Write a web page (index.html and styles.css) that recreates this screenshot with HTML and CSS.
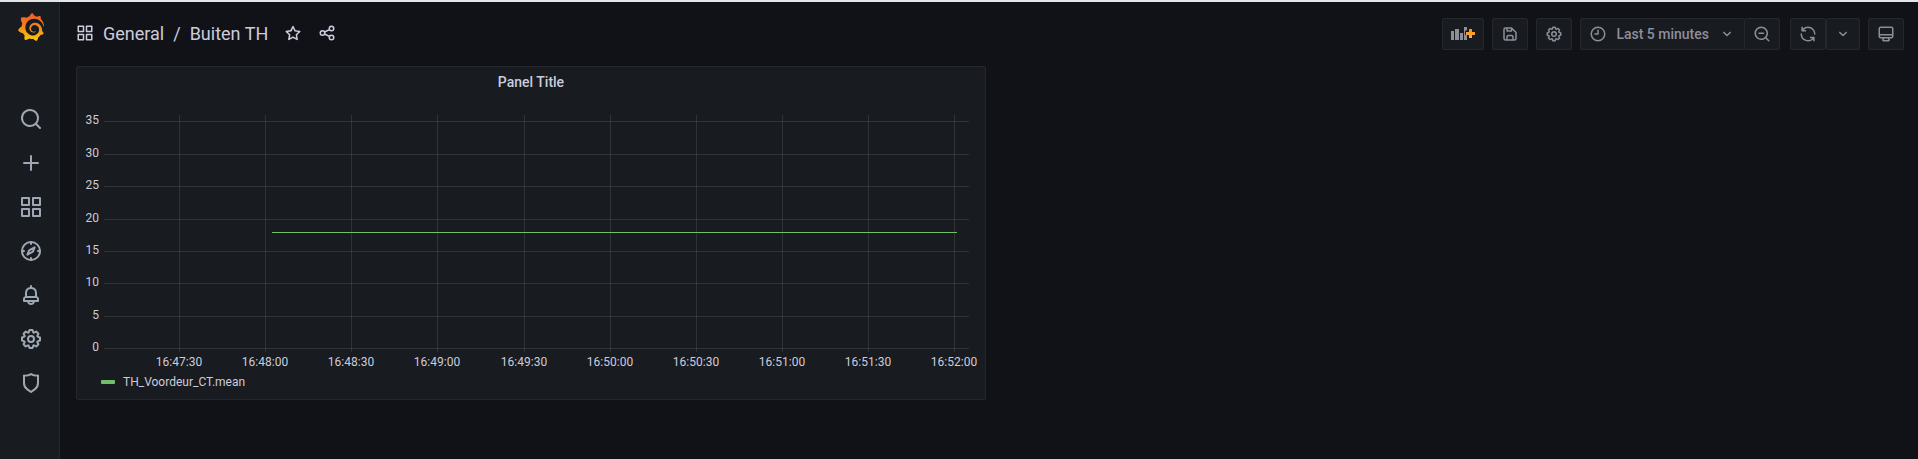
FILE: index.html
```html
<!DOCTYPE html>
<html lang="en">
<head>
    <meta charset="UTF-8">
    <meta name="viewport" content="width=device-width, initial-scale=1.0">
    <title>Buiten TH - Grafana</title>
    <link rel="stylesheet" href="styles.css">
</head>
<body>
    <!-- Icon set -->
    <svg class="icon-defs" aria-hidden="true">
        <symbol id="i-search" viewBox="0 0 24 24"><path d="M21.71,20.29,18,16.61A9,9,0,1,0,16.61,18l3.68,3.68a1,1,0,0,0,1.42,0A1,1,0,0,0,21.71,20.29ZM11,18a7,7,0,1,1,7-7A7,7,0,0,1,11,18Z"/></symbol>
        <symbol id="i-plus" viewBox="0 0 24 24"><path d="M19,11H13V5a1,1,0,0,0-2,0v6H5a1,1,0,0,0,0,2h6v6a1,1,0,0,0,2,0V13h6a1,1,0,0,0,0-2Z"/></symbol>
        <symbol id="i-apps" viewBox="0 0 24 24"><path d="M10,13H3a1,1,0,0,0-1,1v7a1,1,0,0,0,1,1h7a1,1,0,0,0,1-1V14A1,1,0,0,0,10,13ZM9,20H4V15H9ZM21,2H14a1,1,0,0,0-1,1v7a1,1,0,0,0,1,1h7a1,1,0,0,0,1-1V3A1,1,0,0,0,21,2ZM20,9H15V4h5Zm1,4H14a1,1,0,0,0-1,1v7a1,1,0,0,0,1,1h7a1,1,0,0,0,1-1V14A1,1,0,0,0,21,13Zm-1,7H15V15h5ZM10,2H3A1,1,0,0,0,2,3v7a1,1,0,0,0,1,1h7a1,1,0,0,0,1-1V3A1,1,0,0,0,10,2ZM9,9H4V4H9Z"/></symbol>
        <symbol id="i-compass" viewBox="0 0 24 24">
            <g fill="none" stroke="currentColor" stroke-width="2" stroke-linecap="round" stroke-linejoin="round">
                <circle cx="12" cy="12" r="9"/>
                <path d="M12 3v2M12 19v2M3 12h2M19 12h2"/>
                <path d="M15.6 8.4l-1.7 4.3-5.5 2.9 1.7-4.3z"/>
            </g>
        </symbol>
        <symbol id="i-bell" viewBox="0 0 24 24"><path d="M18,13.18V10a6,6,0,0,0-5-5.91V3a1,1,0,0,0-2,0V4.09A6,6,0,0,0,6,10v3.18A3,3,0,0,0,4,16v2a1,1,0,0,0,1,1H8.14a4,4,0,0,0,7.72,0H19a1,1,0,0,0,1-1V16A3,3,0,0,0,18,13.18ZM8,10a4,4,0,0,1,8,0v3H8Zm4,10a2,2,0,0,1-1.72-1h3.44A2,2,0,0,1,12,20Zm6-3H6V16a1,1,0,0,1,1-1H17a1,1,0,0,1,1,1Z"/></symbol>
        <symbol id="i-cog" viewBox="0 0 24 24"><path d="M21.32,9.55l-1.89-.63.89-1.78A1,1,0,0,0,20.13,6L18,3.87a1,1,0,0,0-1.15-.19l-1.78.89-.63-1.89A1,1,0,0,0,13.5,2h-3a1,1,0,0,0-.95.68L8.92,4.57,7.14,3.68A1,1,0,0,0,6,3.87L3.87,6a1,1,0,0,0-.19,1.15l.89,1.78-1.89.63A1,1,0,0,0,2,10.5v3a1,1,0,0,0,.68.95l1.89.63-.89,1.78A1,1,0,0,0,3.87,18L6,20.13a1,1,0,0,0,1.15.19l1.78-.89.63,1.89a1,1,0,0,0,.95.68h3a1,1,0,0,0,.95-.68l.63-1.89,1.78.89A1,1,0,0,0,18,20.13L20.13,18a1,1,0,0,0,.19-1.15l-.89-1.78,1.89-.63A1,1,0,0,0,22,13.5v-3A1,1,0,0,0,21.32,9.55ZM20,12.78l-1.2.4A2,2,0,0,0,17.64,16l.57,1.14-1.1,1.1L16,17.64a2,2,0,0,0-2.79,1.16l-.4,1.2H11.22l-.4-1.2A2,2,0,0,0,8,17.64l-1.14.57-1.1-1.1L6.36,16A2,2,0,0,0,5.2,13.18L4,12.78V11.22l1.2-.4A2,2,0,0,0,6.36,8L5.79,6.89l1.1-1.1L8,6.36A2,2,0,0,0,10.82,5.2l.4-1.2h1.56l.4,1.2A2,2,0,0,0,16,6.36l1.14-.57,1.1,1.1L17.64,8a2,2,0,0,0,1.16,2.79l1.2.4ZM12,8a4,4,0,1,0,4,4A4,4,0,0,0,12,8Zm0,6a2,2,0,1,1,2-2A2,2,0,0,1,12,14Z"/></symbol>
        <symbol id="i-shield" viewBox="0 0 24 24"><path d="M19.63,3.65a1,1,0,0,0-.84-.2,8,8,0,0,1-6.22-1.27,1,1,0,0,0-1.14,0A8,8,0,0,1,5.21,3.45a1,1,0,0,0-.84.2A1,1,0,0,0,4,4.43v7.45a9,9,0,0,0,3.77,7.33l3.65,2.6a1,1,0,0,0,1.16,0l3.65-2.6A9,9,0,0,0,20,11.88V4.43A1,1,0,0,0,19.63,3.65ZM18,11.88a7,7,0,0,1-2.93,5.7L12,19.77,8.93,17.58A7,7,0,0,1,6,11.88V5.58a10,10,0,0,0,6-1.39,10,10,0,0,0,6,1.39Z"/></symbol>
        <symbol id="i-star" viewBox="0 0 24 24"><path d="M22,9.67A1,1,0,0,0,21.14,9l-5.69-.83L12.9,3a1,1,0,0,0-1.8,0L8.55,8.16,2.86,9a1,1,0,0,0-.81.68,1,1,0,0,0,.25,1l4.13,4-1,5.68A1,1,0,0,0,6.9,21.44L12,18.77l5.1,2.67a.93.93,0,0,0,.46.12,1,1,0,0,0,.59-.19,1,1,0,0,0,.4-1l-1-5.68,4.13-4A1,1,0,0,0,22,9.67Zm-6.15,4a1,1,0,0,0-.29.88l.72,4.2-3.76-2a1.06,1.06,0,0,0-.94,0l-3.76,2,.72-4.2a1,1,0,0,0-.29-.88l-3-3,4.21-.61a1,1,0,0,0,.76-.55L12,5.7l1.88,3.82a1,1,0,0,0,.76.55l4.21.61Z"/></symbol>
        <symbol id="i-share" viewBox="0 0 24 24">
            <g fill="none" stroke="currentColor" stroke-width="2">
                <circle cx="18" cy="6" r="3"/>
                <circle cx="6" cy="12" r="3"/>
                <circle cx="18" cy="18" r="3"/>
                <path d="M8.700 10.700l6.600-3.300M8.700 13.300l6.600 3.300"/>
            </g>
        </symbol>
        <symbol id="i-save" viewBox="0 0 24 24"><path d="M20.71,9.29l-6-6a1,1,0,0,0-.32-.21A1.09,1.09,0,0,0,14,3H6A3,3,0,0,0,3,6V18a3,3,0,0,0,3,3H18a3,3,0,0,0,3-3V10A1,1,0,0,0,20.71,9.29ZM9,5h4V7H9Zm6,14H9V16a1,1,0,0,1,1-1h4a1,1,0,0,1,1,1Zm4-1a1,1,0,0,1-1,1H17V16a3,3,0,0,0-3-3H10a3,3,0,0,0-3,3v3H6a1,1,0,0,1-1-1V6A1,1,0,0,1,6,5H7V8A1,1,0,0,0,8,9h6a1,1,0,0,0,1-1V6.41l4,4Z"/></symbol>
        <symbol id="i-clock" viewBox="0 0 24 24"><path d="M12,2A10,10,0,1,0,22,12,10,10,0,0,0,12,2Zm0,18a8,8,0,1,1,8-8A8,8,0,0,1,12,20ZM12,6a1,1,0,0,0-1,1v4H8a1,1,0,0,0,0,2h4a1,1,0,0,0,1-1V7A1,1,0,0,0,12,6Z"/></symbol>
        <symbol id="i-angle-down" viewBox="0 0 24 24"><path d="M17,9.17a1,1,0,0,0-1.41,0L12,12.71,8.46,9.17a1,1,0,0,0-1.41,0,1,1,0,0,0,0,1.42l4.24,4.24a1,1,0,0,0,1.42,0L17,10.59A1,1,0,0,0,17,9.17Z"/></symbol>
        <symbol id="i-search-minus" viewBox="0 0 24 24"><path d="M21.71,20.29,18,16.61A9,9,0,1,0,16.61,18l3.68,3.68a1,1,0,0,0,1.42,0A1,1,0,0,0,21.71,20.29ZM11,18a7,7,0,1,1,7-7A7,7,0,0,1,11,18Z"/><path d="M14,10H8a1,1,0,0,0,0,2h6a1,1,0,0,0,0-2Z"/></symbol>
        <symbol id="i-sync" viewBox="0 0 24 24"><path d="M19.91,15.51H15.38a1,1,0,0,0,0,2h2.4A8,8,0,0,1,4,12a1,1,0,0,0-2,0,10,10,0,0,0,16.88,7.23V21a1,1,0,0,0,2,0V16.5A1,1,0,0,0,19.91,15.51ZM12,2A10,10,0,0,0,5.12,4.77V3a1,1,0,0,0-2,0V7.5a1,1,0,0,0,1,1h4.5a1,1,0,0,0,0-2H6.22A8,8,0,0,1,20,12a1,1,0,0,0,2,0A10,10,0,0,0,12,2Z"/></symbol>
        <symbol id="i-monitor" viewBox="0 0 24 24"><path d="M19,2H5A3,3,0,0,0,2,5V15a3,3,0,0,0,3,3H7.64l-.58,1a2,2,0,0,0,0,2,2,2,0,0,0,1.75,1h6.46A2,2,0,0,0,17,21a2,2,0,0,0,0-2l-.59-1H19a3,3,0,0,0,3-3V5A3,3,0,0,0,19,2ZM8.77,20,10,18H14l1.2,2ZM20,15a1,1,0,0,1-1,1H5a1,1,0,0,1-1-1V14H20Zm0-3H4V5A1,1,0,0,1,5,4H19a1,1,0,0,1,1,1Z"/></symbol>
    </svg>

    <nav class="sidebar" aria-label="Main menu">
        <a href="#" class="logo" aria-label="Home">
            <svg viewBox="0 0 24 24" width="28" height="28">
                <defs>
                    <linearGradient id="logo-fill" x1="0" y1="0" x2="0" y2="1">
                        <stop offset="0" stop-color="#f05a28"/>
                        <stop offset="0.4" stop-color="#f47b20"/>
                        <stop offset="1" stop-color="#fbca0a"/>
                    </linearGradient>
                </defs>
                <path fill="url(#logo-fill)" d="M23.02 10.59a8.578 8.578 0 0 0-.862-3.034 8.911 8.911 0 0 0-1.789-2.445c.337-1.342-.413-2.505-.413-2.505-1.292-.08-2.113.4-2.416.62-.052-.02-.102-.044-.154-.064-.22-.089-.446-.172-.677-.247-.231-.073-.47-.14-.711-.197a9.867 9.867 0 0 0-.875-.161C14.557.753 12.94 0 12.94 0c-1.804 1.145-2.147 2.744-2.147 2.744l-.018.093c-.098.029-.2.057-.298.088-.138.042-.275.094-.413.143-.138.055-.275.107-.41.166a8.869 8.869 0 0 0-1.557.87l-.063-.029c-2.497-.955-4.716.195-4.716.195-.203 2.658.996 4.33 1.235 4.636a11.608 11.608 0 0 0-.607 2.635C1.636 12.677.953 15.014.953 15.014c1.926 2.214 4.171 2.351 4.171 2.351.003-.002.006-.002.006-.005.285.509.615.994.986 1.446.156.19.32.371.488.548-.704 2.009.099 3.68.099 3.68 2.144.08 3.553-.937 3.849-1.173a9.784 9.784 0 0 0 3.164.501h.08l.055-.003.107-.002.103-.005.003.002c1.01 1.44 2.788 1.646 2.788 1.646 1.264-1.332 1.337-2.653 1.337-2.94v-.058c0-.02-.003-.039-.003-.06.265-.187.52-.387.758-.6a7.875 7.875 0 0 0 1.415-1.7c1.43.083 2.437-.885 2.437-.885-.236-1.49-1.085-2.216-1.264-2.354l-.018-.013-.016-.013a.217.217 0 0 1-.031-.02c.008-.092.016-.18.02-.27.011-.162.016-.323.016-.48v-.253l-.005-.098-.008-.135a1.891 1.891 0 0 0-.01-.13c-.003-.042-.008-.083-.013-.125l-.016-.124-.018-.122a6.215 6.215 0 0 0-2.032-3.73 6.015 6.015 0 0 0-3.222-1.46 6.292 6.292 0 0 0-.85-.048l-.107.002h-.063l-.044.003-.104.008a4.777 4.777 0 0 0-3.335 1.695c-.332.4-.592.84-.768 1.297a4.594 4.594 0 0 0-.312 1.817l.003.091c.005.055.007.11.013.164a3.615 3.615 0 0 0 .698 1.82 3.53 3.53 0 0 0 1.827 1.282c.33.098.66.14.971.137.039 0 .078 0 .114-.002l.063-.003c.02 0 .041-.003.062-.003.034-.002.065-.007.099-.01.007 0 .018-.003.028-.003l.031-.005.06-.008a1.18 1.18 0 0 0 .112-.02c.036-.008.072-.013.109-.024a2.634 2.634 0 0 0 .914-.415c.028-.02.056-.041.085-.065a.248.248 0 0 0 .039-.35.244.244 0 0 0-.309-.06l-.078.042c-.09.044-.184.083-.283.116a2.476 2.476 0 0 1-.475.096c-.028.003-.054.006-.083.006l-.083.002c-.026 0-.054 0-.08-.002l-.102-.006h-.012l-.024.006c-.016-.003-.031-.003-.044-.006-.031-.002-.06-.007-.091-.01a2.59 2.59 0 0 1-.724-.213 2.557 2.557 0 0 1-.667-.438 2.52 2.52 0 0 1-.805-1.475 2.306 2.306 0 0 1-.029-.444l.006-.122v-.023l.002-.031c.003-.021.003-.04.005-.06a3.163 3.163 0 0 1 1.352-2.29 3.12 3.12 0 0 1 .937-.43 2.946 2.946 0 0 1 .776-.101h.06l.07.002.045.003h.026l.07.005a4.041 4.041 0 0 1 1.635.49 3.94 3.94 0 0 1 1.602 1.662 3.77 3.77 0 0 1 .397 1.414l.005.076.003.075c.002.026.002.05.002.075 0 .024.003.052 0 .07v.065l-.002.073-.008.174a6.195 6.195 0 0 1-.08.639 5.1 5.1 0 0 1-.267.927 5.31 5.31 0 0 1-.624 1.13 5.052 5.052 0 0 1-3.237 2.014 4.82 4.82 0 0 1-.649.066l-.039.003h-.287a6.607 6.607 0 0 1-1.716-.265 6.776 6.776 0 0 1-3.4-2.274 6.75 6.75 0 0 1-.746-1.15 6.616 6.616 0 0 1-.714-2.596l-.005-.083-.002-.02v-.056l-.003-.073v-.096l-.003-.104v-.07l.003-.163c.008-.22.026-.45.054-.678a8.707 8.707 0 0 1 .28-1.355c.128-.444.286-.872.473-1.277a7.04 7.04 0 0 1 1.456-2.1 5.925 5.925 0 0 1 .953-.763c.169-.111.343-.213.524-.306.089-.05.182-.091.273-.135.047-.02.093-.042.138-.062a7.177 7.177 0 0 1 .714-.267l.145-.045c.049-.015.098-.026.148-.041.098-.029.197-.052.296-.076.049-.013.1-.02.15-.033l.15-.032.151-.028.076-.013.075-.01.153-.024c.057-.01.114-.013.171-.023l.169-.021c.036-.003.073-.008.106-.01l.073-.008.036-.003.042-.002c.057-.003.114-.008.171-.01l.086-.006h.023l.037-.003.145-.007a7.999 7.999 0 0 1 1.708.125 7.917 7.917 0 0 1 2.048.68 8.253 8.253 0 0 1 1.672 1.09l.09.077.089.078c.06.052.114.107.171.159.057.052.112.106.166.16.052.055.107.107.159.164a8.671 8.671 0 0 1 1.41 1.978c.012.026.028.052.04.078l.04.078.075.156c.023.051.05.1.07.153l.065.15a8.848 8.848 0 0 1 .45 1.34.19.19 0 0 0 .201.142.186.186 0 0 0 .172-.184c.01-.246.002-.532-.024-.856z"/>
            </svg>
        </a>
        <a href="#" class="side-link" aria-label="Search"><svg class="icon-lg"><use href="#i-search"/></svg></a>
        <a href="#" class="side-link" aria-label="Create"><svg class="icon-lg"><use href="#i-plus"/></svg></a>
        <a href="#" class="side-link" aria-label="Dashboards"><svg class="icon-lg"><use href="#i-apps"/></svg></a>
        <a href="#" class="side-link" aria-label="Explore"><svg class="icon-lg"><use href="#i-compass"/></svg></a>
        <a href="#" class="side-link" aria-label="Alerting"><svg class="icon-lg"><use href="#i-bell"/></svg></a>
        <a href="#" class="side-link" aria-label="Configuration"><svg class="icon-lg"><use href="#i-cog"/></svg></a>
        <a href="#" class="side-link" aria-label="Server Admin"><svg class="icon-lg"><use href="#i-shield"/></svg></a>
    </nav>

    <main class="content">
        <header class="navbar">
            <div class="breadcrumb">
                <svg class="icon"><use href="#i-apps"/></svg>
                <a href="#">General</a>
                <span class="separator">/</span>
                <a href="#">Buiten TH</a>
                <button type="button" class="icon-button" aria-label="Mark as favorite"><svg class="icon"><use href="#i-star"/></svg></button>
                <button type="button" class="icon-button" aria-label="Share dashboard"><svg class="icon"><use href="#i-share"/></svg></button>
            </div>

            <div class="toolbar">
                <button type="button" class="tool" aria-label="Add panel">
                    <svg class="add-panel" viewBox="0 0 24 14">
                        <defs>
                            <linearGradient id="plus-fill" x1="0" y1="0" x2="0" y2="1">
                                <stop offset="0" stop-color="#f58b33"/>
                                <stop offset="1" stop-color="#fbb42a"/>
                            </linearGradient>
                        </defs>
                        <path d="M0 4h3v9H0zM4 2h4v11H4zM9 6h3v7H9zM13 0h3v3l-2 1v4h2v5h-3z"/>
                        <path fill="url(#plus-fill)" d="M18 2h3v3h3v3h-3v3h-3V8h-3V5h3z"/>
                    </svg>
                </button>
                <button type="button" class="tool" aria-label="Save dashboard"><svg class="icon"><use href="#i-save"/></svg></button>
                <button type="button" class="tool" aria-label="Dashboard settings"><svg class="icon"><use href="#i-cog"/></svg></button>
                <div class="tool-group">
                    <button type="button" class="tool time-picker">
                        <svg class="icon"><use href="#i-clock"/></svg>
                        <span>Last 5 minutes</span>
                        <svg class="icon"><use href="#i-angle-down"/></svg>
                    </button>
                    <button type="button" class="tool zoom-out" aria-label="Zoom out time range"><svg class="icon"><use href="#i-search-minus"/></svg></button>
                </div>
                <div class="tool-group refresh">
                    <button type="button" class="tool" aria-label="Refresh dashboard"><svg class="icon"><use href="#i-sync"/></svg></button>
                    <button type="button" class="tool interval" aria-label="Refresh interval"><svg class="icon"><use href="#i-angle-down"/></svg></button>
                </div>
                <button type="button" class="tool" aria-label="Cycle view mode"><svg class="icon"><use href="#i-monitor"/></svg></button>
            </div>
        </header>

        <div class="dashboard">
            <section class="panel">
                <h2>Panel Title</h2>
                <svg class="graph" viewBox="0 0 908 270" role="img" aria-label="TH_Voordeur_CT.mean over time">
                    <path class="grid" d="M27 22.5h865M27 55.5h865M27 87.5h865M27 120.5h865M27 152.5h865M27 184.5h865M27 217.5h865M27 249.5h865"/>
                    <path class="grid" d="M102.5 16v237M188.5 16v237M274.5 16v237M360.5 16v237M447.5 16v237M533.5 16v237M619.5 16v237M705.5 16v237M791.5 16v237M877.5 16v237"/>
                    <path class="series" d="M195 133.5H880"/>
                    <g class="y-axis">
                        <text x="22" y="25">35</text>
                        <text x="22" y="58">30</text>
                        <text x="22" y="90">25</text>
                        <text x="22" y="123">20</text>
                        <text x="22" y="155">15</text>
                        <text x="22" y="187">10</text>
                        <text x="22" y="220">5</text>
                        <text x="22" y="252">0</text>
                    </g>
                    <g class="x-axis">
                        <text x="102" y="267">16:47:30</text>
                        <text x="188" y="267">16:48:00</text>
                        <text x="274" y="267">16:48:30</text>
                        <text x="360" y="267">16:49:00</text>
                        <text x="447" y="267">16:49:30</text>
                        <text x="533" y="267">16:50:00</text>
                        <text x="619" y="267">16:50:30</text>
                        <text x="705" y="267">16:51:00</text>
                        <text x="791" y="267">16:51:30</text>
                        <text x="877" y="267">16:52:00</text>
                    </g>
                </svg>
                <div class="legend">
                    <span class="swatch"></span>
                    <button type="button">TH_Voordeur_CT.mean</button>
                </div>
            </section>
        </div>
    </main>
</body>
</html>
```

FILE: styles.css
```css
* {
    box-sizing: border-box;
}

body {
    margin: 0;
    min-height: 100vh;
    display: flex;
    border-top: 2px solid #e3e5e8;
    background: #111217;
    color: #ccccdc;
    font-family: Roboto, Arial, sans-serif;
    font-size: 14px;
}

a {
    color: inherit;
    text-decoration: none;
}

button {
    font-family: inherit;
    color: inherit;
    background: none;
    border: none;
    padding: 0;
    cursor: pointer;
}

svg {
    display: block;
    fill: currentColor;
}

.icon-defs {
    position: absolute;
    width: 0;
    height: 0;
}

.icon {
    width: 18px;
    height: 18px;
    flex-shrink: 0;
}

.icon-lg {
    width: 24px;
    height: 24px;
}

/* Side menu */
.sidebar {
    width: 60px;
    flex-shrink: 0;
    display: flex;
    flex-direction: column;
    align-items: center;
    padding: 11px 0 0 2px;
    background: #181b1f;
    border-right: 1px solid #25272c;
    color: #9fa7b3;
}

.logo {
    margin-bottom: 56px;
}

.side-link {
    height: 44px;
    display: flex;
    align-items: center;
}

.side-link:hover {
    color: #fff;
}

/* Top bar */
.content {
    flex: 1;
    min-width: 0;
    padding: 16px 14px 0 16px;
}

.navbar {
    display: flex;
    justify-content: space-between;
    align-items: center;
    margin-bottom: 16px;
}

.breadcrumb {
    display: flex;
    align-items: center;
    gap: 9px;
    padding-bottom: 2px;
    font-size: 18px;
}

.icon-button {
    margin-left: 7px;
}

.toolbar {
    display: flex;
    gap: 8px;
}

.tool {
    height: 32px;
    display: flex;
    align-items: center;
    padding: 0 8px;
    background: #181b1f;
    border: 1px solid #25272c;
    border-radius: 2px;
    color: #8e8e9a;
    font-size: 14px;
    font-weight: 500;
}

.tool:hover {
    background: #22252b;
}

.add-panel {
    width: 24px;
    height: 14px;
}

.tool-group {
    display: flex;
}

.zoom-out {
    margin-left: -1px;
}

.refresh {
    margin-left: 2px;
}

.interval {
    padding: 0 7px;
}

.time-picker {
    gap: 9px;
}

/* Dashboard */
.dashboard {
    display: grid;
    grid-template-columns: 1fr 1fr;
    gap: 8px;
}

.panel {
    background: #181b1f;
    border: 1px solid #25272c;
    border-radius: 2px;
    padding-bottom: 4px;
}

.panel h2 {
    margin: 0;
    padding-bottom: 2px;
    font-size: 14px;
    font-weight: 500;
    line-height: 30px;
    text-align: center;
}

.graph {
    width: 100%;
    overflow: visible;
}

.graph text {
    fill: #ccccdc;
    font-size: 12px;
}

.grid {
    fill: none;
    stroke: #f0fae6;
    stroke-opacity: 0.11;
}

.series {
    fill: none;
    stroke: #73bf69;
}

.y-axis {
    text-anchor: end;
}

.x-axis {
    text-anchor: middle;
}

.legend {
    display: flex;
    align-items: center;
    gap: 8px;
    height: 26px;
    padding-left: 24px;
}

.legend button {
    font-size: 12px;
}

.swatch {
    width: 14px;
    height: 4px;
    border-radius: 1px;
    background: #73bf69;
}
```
